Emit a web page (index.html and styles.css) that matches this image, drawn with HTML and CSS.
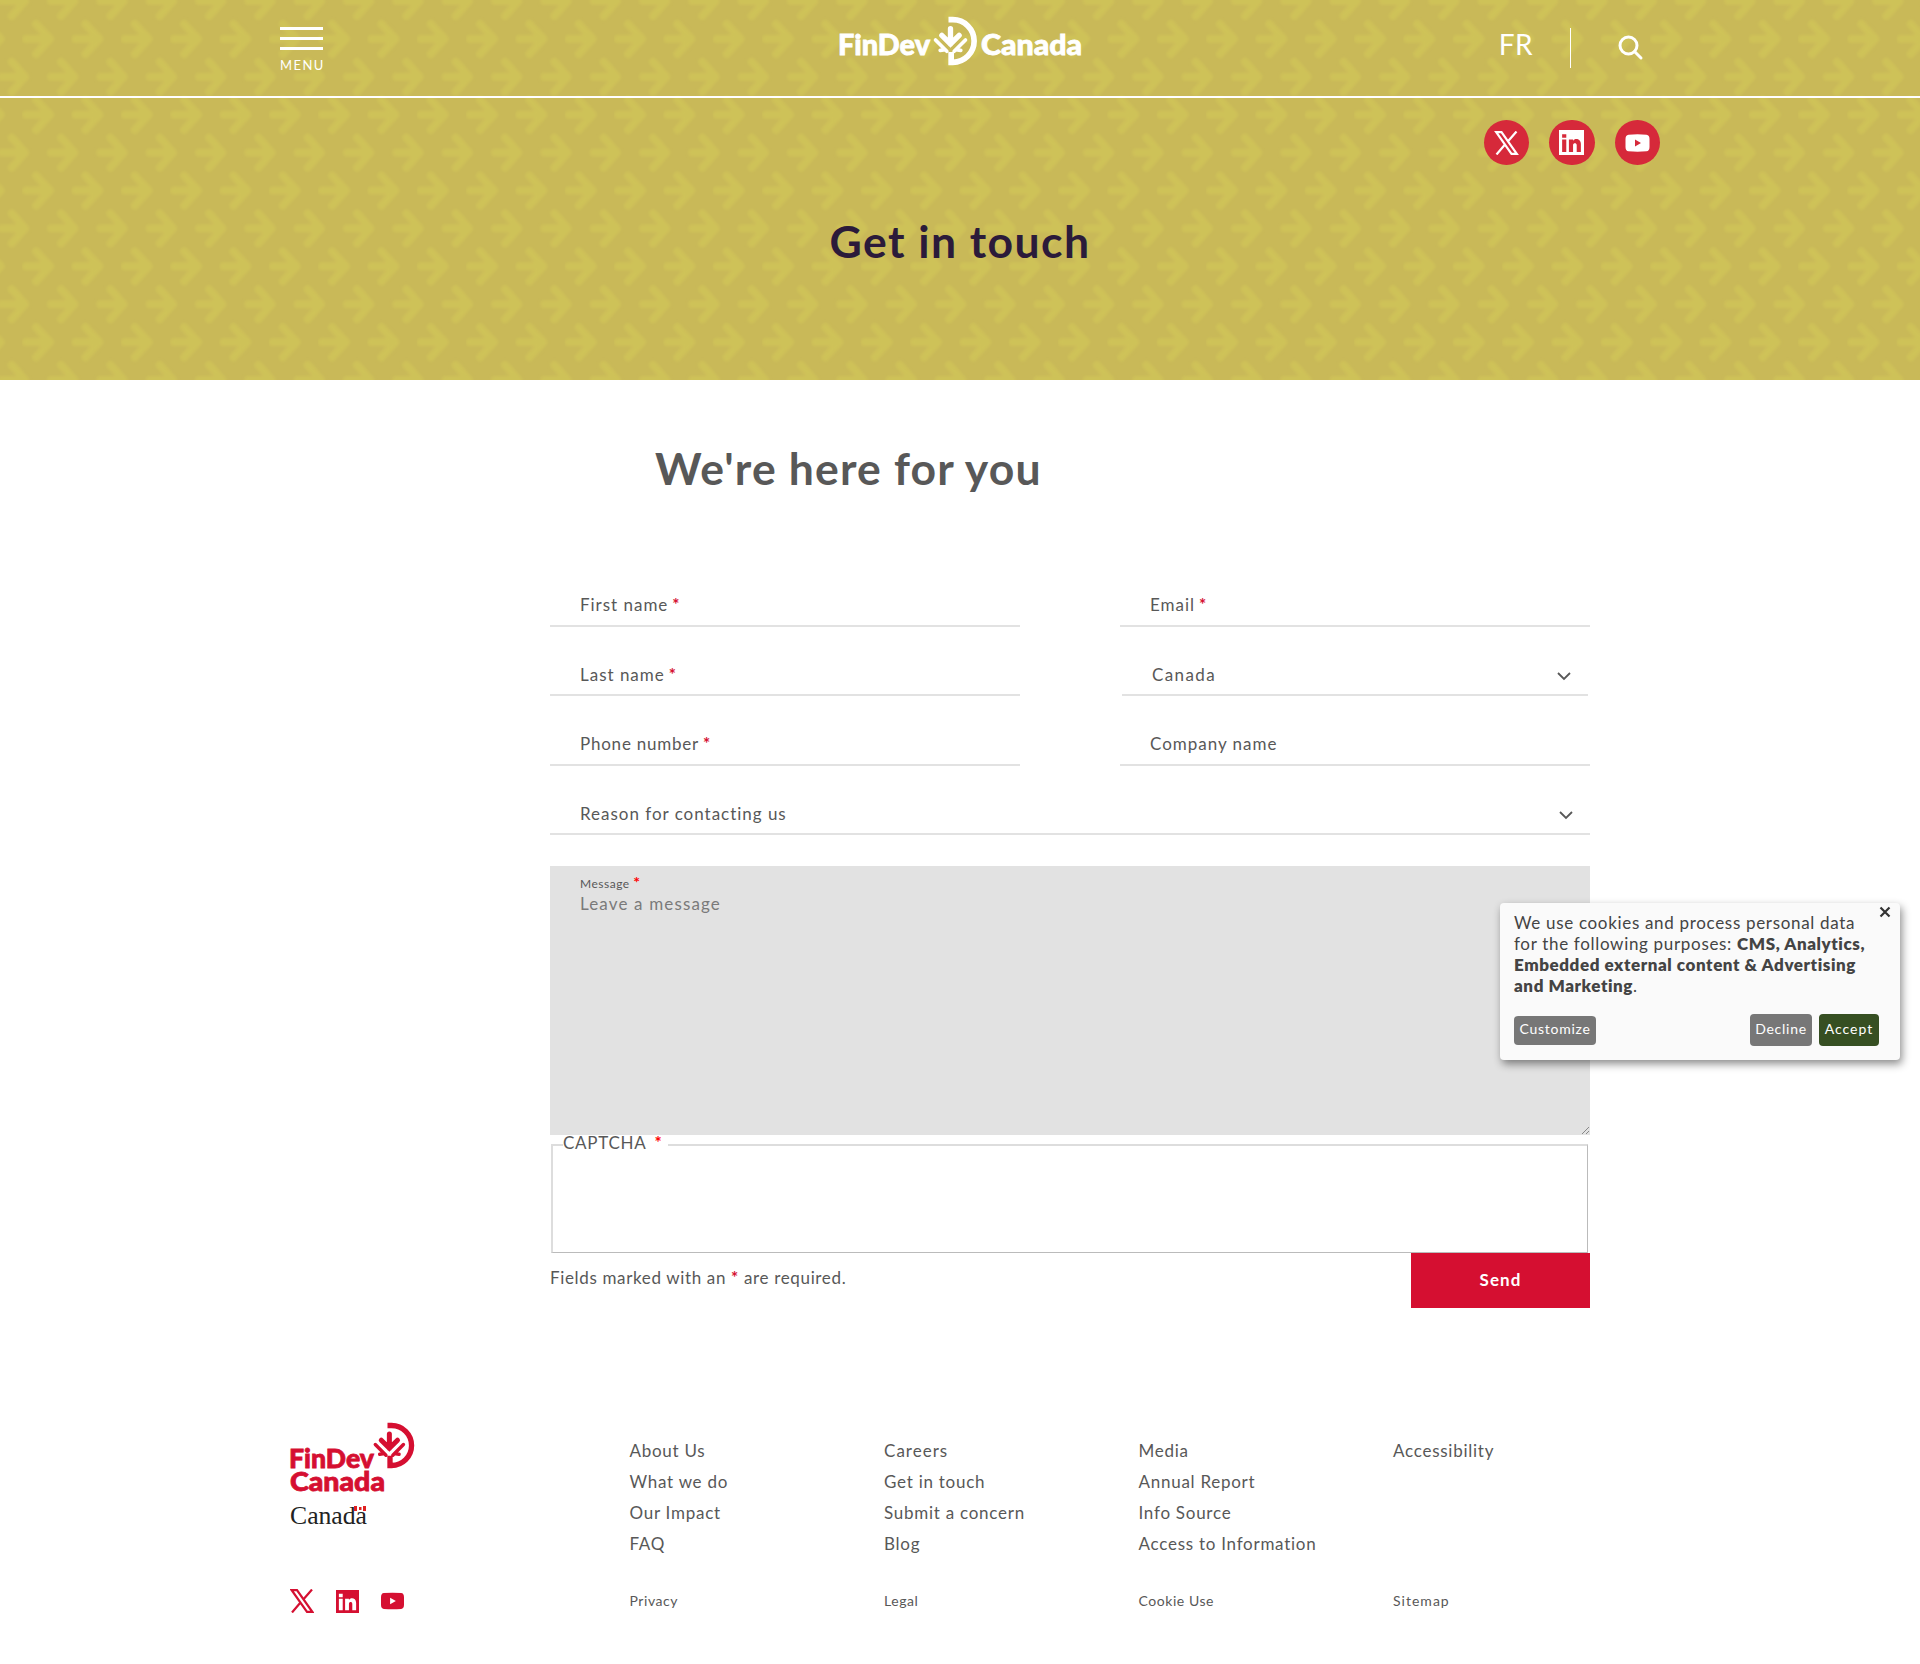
FILE: index.html
```html
<!DOCTYPE html>
<html lang="en">
<head>
<meta charset="utf-8">
<title>Get in touch | FinDev Canada</title>
<link rel="stylesheet" href="styles.css">
</head>
<body>
<svg class="defs" width="0" height="0" aria-hidden="true">
  <defs>
    <symbol id="emblem" viewBox="0 0 136 150">
      <g fill="none" stroke="currentColor">
        <path d="M48 11H61A64 64 0 0 1 61 139H56V108" stroke-width="17"/>
        <path d="M54 38V84M28 58L54 84L80 58" stroke-width="16" stroke-linecap="round"/>
        <path d="M9 72L43 106M99 72L65 106M23 103L38 101M85 103L70 101" stroke-width="11" stroke-linecap="round"/>
      </g>
    </symbol>
    <symbol id="x" viewBox="0 0 24 24"><path fill="none" stroke="currentColor" stroke-width="2.200" d="M1.700 1.200H7L22.300 22.800H17ZM22 .5L13.300 10.500M10.500 13.500L2 23.500"/></symbol>
    <symbol id="in" viewBox="0 0 24 24"><path fill="currentColor" fill-rule="evenodd" d="M0 0H24V24H0ZM3 4V7.500H7V4ZM3 9V21H7V9ZM9.500 9V21H13.500V14.500C13.500 12 17 12 17 14.500V21H21V13.500C21 8 15 7.500 13.500 10.500V9Z"/></symbol>
    <symbol id="yt" viewBox="0 0 24 18"><path fill="currentColor" fill-rule="evenodd" d="M3 .7Q12 0 21 .7Q24 1 24 5V13Q24 17 21 17.300Q12 18 3 17.300Q0 17 0 13V5Q0 1 3 .7ZM9.500 5.500V12.500L15.500 9Z"/></symbol>
  </defs>
</svg>
<div class="hero">
  <svg class="arrows" aria-hidden="true">
    <defs>
      <filter id="soft" x="-20%" y="-20%" width="140%" height="140%"><feGaussianBlur stdDeviation="1.700"/></filter>
      <pattern id="arrowTile" x="22" y="1" width="49.33" height="75.8" patternUnits="userSpaceOnUse">
        <g fill="none" stroke="#d0c459" stroke-width="8" stroke-linecap="round" stroke-linejoin="round" filter="url(#soft)">
          <path d="M4 38H28M14 23L28 38L14 53"/>
          <path d="M-21 0H3M-11 -15L3 0L-11 15"/>
          <path d="M29 0H53M39 -15L53 0L39 15"/>
          <path d="M-21 75.800H3M-11 60.800L3 75.800L-11 90.800"/>
          <path d="M29 75.800H53M39 60.800L53 75.800L39 90.800"/>
        </g>
      </pattern>
    </defs>
    <rect width="100%" height="100%" fill="url(#arrowTile)"/>
  </svg>
  <header class="topbar">
    <a class="menu"><i></i><i></i><i></i><span>MENU</span></a>
    <svg class="brand" width="244" height="56" viewBox="0 0 244 56">
      <text x="-1" y="41" textLength="92" lengthAdjust="spacingAndGlyphs">FinDev</text>
      <use href="#emblem" x="93.500" y="2" width="45.300" height="50"/>
      <text x="142" y="41" textLength="101" lengthAdjust="spacingAndGlyphs">Canada</text>
    </svg>
    <div class="tools">
      <a class="lang">FR</a>
      <span class="rule"></span>
      <svg class="search" width="26" height="26" viewBox="0 0 26 26"><circle cx="10.500" cy="10.500" r="8.500"/><path d="M16.500 16.500L23 23"/></svg>
    </div>
  </header>
  <div class="share">
    <a><svg width="25" height="24"><use href="#x"/></svg></a>
    <a><svg width="25" height="25"><use href="#in"/></svg></a>
    <a><svg width="25" height="18"><use href="#yt"/></svg></a>
  </div>
  <h1>Get in touch</h1>
</div>
<main>
  <h2>We're here for you</h2>
  <form>
    <div class="columns">
      <div class="col">
        <label class="field"><span>First name</span> <b>*</b></label>
        <label class="field"><span>Last name</span> <b>*</b></label>
        <label class="field"><span class="snug">Phone number</span> <b>*</b></label>
      </div>
      <div class="col">
        <label class="field"><span>Email</span> <b>*</b></label>
        <label class="field country"><span>Canada</span><svg class="chev" width="14" height="9"><path d="M1 1L7 7L13 1"/></svg></label>
        <label class="field"><span>Company name</span></label>
      </div>
    </div>
    <label class="field reason"><span>Reason for contacting us</span><svg class="chev" width="14" height="9"><path d="M1 1L7 7L13 1"/></svg></label>
    <div class="message">
      <div class="small">Message <b>*</b></div>
      <div class="hint">Leave a message</div>
      <svg class="grip" width="9" height="9"><path d="M1 8L8 1M5 8L8 5"/></svg>
    </div>
    <fieldset><legend>CAPTCHA<b>*</b></legend></fieldset>
    <div class="end">
      <p>Fields marked with an <b>*</b> are required.</p>
      <button type="button">Send</button>
    </div>
  </form>
</main>
<footer>
  <div class="marks">
    <svg width="130" height="110" viewBox="0 0 130 110">
      <text class="fd" x="-1" y="46.500" textLength="85" lengthAdjust="spacingAndGlyphs">FinDev</text>
      <text class="fd" x="0" y="70" textLength="95" lengthAdjust="spacingAndGlyphs">Canada</text>
      <use href="#emblem" x="82.500" y="1" width="42.500" height="47"/>
      <text class="wm" x="0" y="102.500" textLength="77" lengthAdjust="spacingAndGlyphs">Canada</text>
      <path fill="#e02020" d="M64 85h3v5h-3zM73 85h3v5h-3zM69 86h2.500v3h-2.500z"/>
    </svg>
    <div class="follow">
      <svg width="24" height="24"><use href="#x"/></svg>
      <svg width="23" height="23"><use href="#in"/></svg>
      <svg width="23" height="18"><use href="#yt"/></svg>
    </div>
  </div>
  <nav>
    <ul><li>About Us</li><li>What we do</li><li>Our Impact</li><li>FAQ</li><li>Privacy</li></ul>
    <ul><li class="wide">Careers</li><li>Get in touch</li><li>Submit a concern</li><li>Blog</li><li>Legal</li></ul>
    <ul><li>Media</li><li>Annual Report</li><li>Info Source</li><li>Access to Information</li><li>Cookie Use</li></ul>
    <ul><li>Accessibility</li><li></li><li></li><li></li><li class="wide">Sitemap</li></ul>
  </nav>
</footer>
<aside class="cookie">
  <svg class="close" width="12" height="12"><path d="M1.500 1.500L10.500 10.500M10.500 1.500L1.500 10.500"/></svg>
  <p>We use cookies and process personal data<br>for the following purposes: <strong>CMS, Analytics,</strong><br><strong>Embedded external content &amp; Advertising</strong><br><strong>and Marketing</strong>.</p>
  <div class="choices"><a class="custom">Customize</a><a class="decline">Decline</a><a class="accept">Accept</a></div>
</aside>
</body>
</html>
```
FILE: styles.css
```css
* { box-sizing: border-box; }
body { margin: 0; background: #fff; color: #585858; font: 17px/21px Lato, "Open Sans", sans-serif; letter-spacing: .74px; }
.defs { position: absolute; }
a { color: inherit; text-decoration: none; }
b { color: #d50f31; font-weight: 700; }

.hero { position: relative; height: 380px; background: #c9b958; overflow: hidden; }
.arrows { position: absolute; inset: 0; width: 100%; height: 100%; opacity: .85; }
.topbar { position: relative; height: 98px; padding: 0 276px 0 280px; border-bottom: 2px solid #fff; display: grid; grid-template-columns: 559px 244px 1fr; color: #fff; }
.menu { padding-top: 27px; width: 43px; }
.menu i { display: block; height: 3px; margin-bottom: 7px; background: #fff; }
.menu span { display: block; width: max-content; margin-top: 7px; font-size: 13px; line-height: 16px; letter-spacing: 1.4px; }
.brand { margin-top: 14px; fill: #fff; stroke: none; font: 900 29px Lato, sans-serif; letter-spacing: 0; overflow: visible; }
.brand text { stroke: #fff; stroke-width: .8; }
.tools { display: flex; justify-content: flex-end; align-items: flex-start; }
.lang { margin-top: 27px; font-size: 28px; line-height: 34px; letter-spacing: .4px; }
.rule { width: 1px; height: 40px; margin: 28px 47px 0 37px; background: #fff; }
.search { margin-top: 35px; fill: none; stroke: #fff; stroke-width: 3; stroke-linecap: round; }
.share { position: relative; display: flex; justify-content: flex-end; gap: 20px; padding: 22px 260px 0 0; }
.share a { width: 45.400px; height: 45.400px; border-radius: 50%; background: #d6293a; color: #fff; display: flex; align-items: center; justify-content: center; }
h1, h2 { margin: 0; font-size: 44.500px; line-height: 52px; font-weight: 700; letter-spacing: 1.45px; }
h1 { position: relative; margin-top: 50px; text-align: center; color: #2b1b3a; }

main { padding: 62px 330px 0 550px; }
h2 { padding-left: 105px; letter-spacing: 1.15px; }
form { padding-top: 63px; }
.columns { display: grid; grid-template-columns: 470px 470px; gap: 100px; }
.field { display: flex; align-items: flex-end; gap: 4px; height: 69.500px; padding: 0 0 9.500px 30px; border-bottom: 2px solid #e2e2e2; letter-spacing: .98px; }
.snug { letter-spacing: .78px; }
.country { margin: 0 2px; letter-spacing: 1.4px; }
.chev { margin: 0 17px 4px auto; fill: none; stroke: #585858; stroke-width: 1.800; }
.message { position: relative; height: 269px; margin-top: 30.500px; padding: 9px 30px; background: #e2e2e2; }
.small { font-size: 12px; line-height: 18px; letter-spacing: .5px; }
.small b { font-size: 16px; line-height: 10px; color: #f00; }
.hint { color: #7a7a7a; letter-spacing: 1.14px; }
.grip { position: absolute; right: 0; bottom: 0; fill: none; stroke: #888; }
fieldset { height: 121px; margin: -2.500px 2px 0 1px; padding: 0 10px; border: 2px solid #ddd; border-right: 1px solid #bbb; border-bottom: 1px solid #bbb; }
legend { padding: 0 5px 5px 0; }
legend b { margin-left: 8px; color: #f00; }
.end { display: flex; justify-content: space-between; }
.end p { margin: 14px 0 0; letter-spacing: .65px; }
button { width: 179px; height: 55px; padding: 0 0 3px; border: 0; background: #d50f31; color: #fff; font: 700 17px/21px Lato, sans-serif; letter-spacing: 1.1px; }

footer { display: grid; grid-template-columns: 339.500px 1fr; padding: 113px 0 0 290px; }
.marks { color: #d50f31; letter-spacing: 0; }
.marks svg { display: block; overflow: visible; }
.fd { font: 900 27px Lato, sans-serif; fill: #d50f31; stroke: #d50f31; stroke-width: .8; }
.wm { font: 25px "Liberation Serif", serif; fill: #222; }
.follow { display: flex; align-items: center; gap: 22px; margin-top: 58px; }
nav { display: grid; grid-template-columns: repeat(4, 254.500px); padding-top: 19px; }
ul { margin: 0; padding: 0; list-style: none; }
li { height: 31px; }
li:last-child { margin-top: 26px; font-size: 14px; letter-spacing: .55px; }
li.wide:nth-child(n) { letter-spacing: 1.02px; }

.cookie { position: absolute; left: 1500px; top: 903px; width: 400px; height: 157px; padding: 9px 14px; border-radius: 4px; background: #fafafa; color: #444; box-shadow: 2px 4px 8px rgba(0,0,0,.45); }
.cookie p { margin: 0; white-space: nowrap; letter-spacing: .68px; }
.cookie strong { font-weight: 800; letter-spacing: .57px; }
.close { position: absolute; right: 9px; top: 3px; stroke: #333; stroke-width: 2.200; }
.choices { display: flex; align-items: center; gap: 7px; margin: 18px 7px 0 0; font-size: 14px; color: #fff; }
.choices a { height: 32px; padding: 4px 0 0; border-radius: 4px; background: #777; text-align: center; }
.choices .custom { width: 82px; height: 29px; padding-top: 2px; margin-right: auto; }
.choices .decline { width: 62px; }
.choices .accept { width: 60px; background: #364f22; letter-spacing: 1px; }
```
